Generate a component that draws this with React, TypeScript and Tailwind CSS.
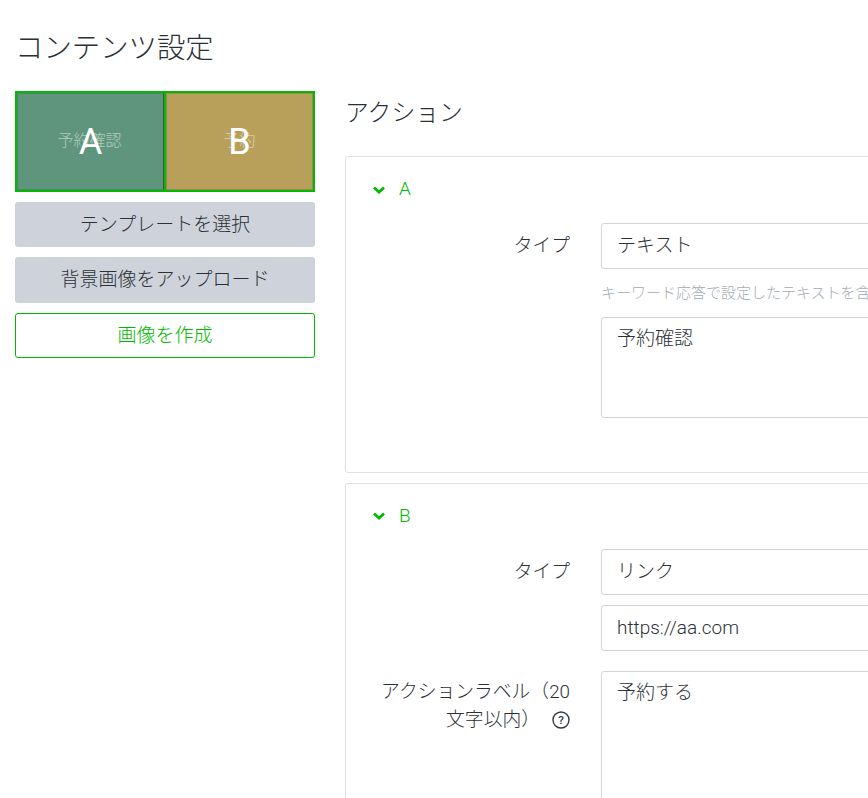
const font = "font-['Roboto','Noto_Sans_CJK_JP',sans-serif]";

const Chevron = () => (
  <svg width="14" height="10" viewBox="0 0 14 10" className="shrink-0">
    <path d="M2 2.5 L7 7 L12 2.5" fill="none" stroke="#00b900" strokeWidth="2.8" />
  </svg>
);

const Field = ({ children, tall, height }: { children: string; tall?: boolean; height?: string }) => (
  <div
    className={`w-[400px] rounded-[3px] border border-[#ced4da] bg-white px-[15px] text-[19px] font-light text-[#2b3036] ${
      tall ? `${height} pt-[6px] leading-[30px]` : 'flex h-[46px] items-center'
    }`}
  >
    {children}
  </div>
);

const Row = ({ label, children, labelClass }: { label: React.ReactNode; children: React.ReactNode; labelClass: string }) => (
  <div className="flex">
    <div className={`w-[198px] shrink-0 text-right text-[18.8px] leading-[28px] font-light whitespace-nowrap text-[#2b3036] ${labelClass}`}>
      {label}
    </div>
    <div className="ml-[31px] flex shrink-0 flex-col">{children}</div>
  </div>
);

const ActionCard = ({ name, children, className, headClass }: { name: string; children: React.ReactNode; className: string; headClass: string }) => (
  <div className={`w-[600px] rounded-[3px] border border-[#dee2e6] pl-[26px] ${className}`}>
    <div className={`flex items-center gap-[13px] pb-[1px] text-[19px] font-light text-[#00b900] ${headClass}`}>
      <Chevron />
      <span>{name}</span>
    </div>
    {children}
  </div>
);

const buttonText = 'text-[19px] font-light pt-[1px]';

export default function App() {
  return (
    <div className={`h-[798px] w-[868px] overflow-hidden bg-white pl-[15px] ${font}`}>
      <h1 className="pt-[28px] text-[28.4px] leading-[42px] font-light text-[#2b3036]">コンテンツ設定</h1>
      <div className="mt-[21px] flex gap-[30px]">
        <div className="flex w-[300px] shrink-0 flex-col gap-[10px]">
          <div className="grid h-[101px] grid-cols-2 gap-[2px] border-2 border-[#00b900] bg-[#00b900]">
            <div className="relative flex items-center justify-center border border-[#567f6d] border-r-[#3c5a4e] bg-[#5f957c] pr-[2px] pb-[1px]">
              <span className="text-[16px] font-light text-white/50">予約確認</span>
              <span className="absolute inset-0 flex items-center justify-center text-[36px] text-white">A</span>
            </div>
            <div className="relative flex items-center justify-center border border-[#998a55] bg-[#b8a05b] pb-[1px]">
              <span className="text-[16px] font-light text-white/50">予約</span>
              <span className="absolute inset-0 flex items-center justify-center text-[36px] text-white">B</span>
            </div>
          </div>
          <div className={`flex h-[45px] items-center justify-center rounded-[3px] bg-[#ced3db] text-[#2b3036] ${buttonText}`}>
            テンプレートを選択
          </div>
          <div className={`flex h-[46px] items-center justify-center rounded-[3px] bg-[#ced3db] text-[#2b3036] ${buttonText}`}>
            背景画像をアップロード
          </div>
          <div className={`flex h-[45px] items-center justify-center rounded-[3px] border border-[#00b900] bg-white text-[#00b900] ${buttonText}`}>
            画像を作成
          </div>
        </div>
        <div className="shrink-0">
          <h2 className="text-[23.8px] leading-[44px] font-light text-[#2b3036]">アクション</h2>
          <ActionCard name="A" className="mt-[21px] h-[317px]" headClass="h-[66px]">
            <Row label="タイプ" labelClass="pt-[9px]">
              <Field>テキスト</Field>
              <p className="flex h-[48px] items-center pt-[1px] text-[15px] font-light whitespace-nowrap text-[#a4abb3]">
                キーワード応答で設定したテキストを含むメッセージを送信します
              </p>
              <Field tall height="h-[101px]">予約確認</Field>
            </Row>
          </ActionCard>
          <ActionCard name="B" className="mt-[10px] h-[400px]" headClass="h-[65px]">
            <Row label="タイプ" labelClass="pt-[9px]">
              <Field>リンク</Field>
              <div className="mt-[10px]">
                <Field>https://aa.com</Field>
              </div>
            </Row>
            <div className="mt-[20px]">
              <Row
                labelClass="pt-[7px]"
                label={
                  <>
                    アクションラベル（20
                    <br />
                    文字以内）
                    <svg width="18" height="18" viewBox="0 0 18 18" className="ml-[12px] inline-block align-[-3px]">
                      <circle cx="9" cy="9" r="8" fill="none" stroke="#343a40" strokeWidth="1.4" />
                      <text x="9" y="13" textAnchor="middle" fontSize="11.5" fontWeight="500" fill="#343a40">?</text>
                    </svg>
                  </>
                }
              >
                <Field tall height="h-[160px]">予約する</Field>
              </Row>
            </div>
          </ActionCard>
        </div>
      </div>
    </div>
  );
}
